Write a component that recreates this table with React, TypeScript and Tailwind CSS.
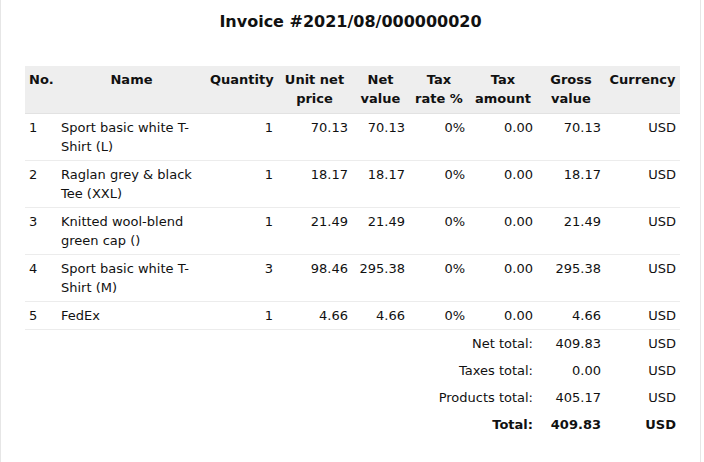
type Line = {
  no: number
  name: string
  qty: number
  unit: string
  net: string
  rate: string
  tax: string
  gross: string
  currency: string
}

const lines: Line[] = [
  { no: 1, name: "Sport basic white T-Shirt (L)", qty: 1, unit: "70.13", net: "70.13", rate: "0%", tax: "0.00", gross: "70.13", currency: "USD" },
  { no: 2, name: "Raglan grey & black Tee (XXL)", qty: 1, unit: "18.17", net: "18.17", rate: "0%", tax: "0.00", gross: "18.17", currency: "USD" },
  { no: 3, name: "Knitted wool-blend green cap ()", qty: 1, unit: "21.49", net: "21.49", rate: "0%", tax: "0.00", gross: "21.49", currency: "USD" },
  { no: 4, name: "Sport basic white T-Shirt (M)", qty: 3, unit: "98.46", net: "295.38", rate: "0%", tax: "0.00", gross: "295.38", currency: "USD" },
  { no: 5, name: "FedEx", qty: 1, unit: "4.66", net: "4.66", rate: "0%", tax: "0.00", gross: "4.66", currency: "USD" },
]

const totals = [
  { label: "Net total:", value: "409.83" },
  { label: "Taxes total:", value: "0.00" },
  { label: "Products total:", value: "405.17" },
  { label: "Total:", value: "409.83", bold: true },
]

const th = "px-1 pt-1 pb-[5px] align-top font-bold text-center"
const td = "px-1 py-1 align-top text-right"

export default function App() {
  return (
    <div className="min-h-[462px] w-[701px] border-x border-[#e6e6e6] bg-white text-[#111] font-['DejaVu_Sans',sans-serif] text-[13px] leading-[19px]">
      <h1 className="pt-[13px] pb-[35px] text-center text-[16px] leading-[18px] font-bold">
        Invoice #2021/08/000000020
      </h1>

      <table className="ml-6 w-[655px] table-fixed border-collapse">
        <colgroup>
          <col className="w-[32px]" />
          <col className="w-[149px]" />
          <col className="w-[71px]" />
          <col className="w-[75px]" />
          <col className="w-[57px]" />
          <col className="w-[60px]" />
          <col className="w-[68px]" />
          <col className="w-[68px]" />
          <col className="w-[75px]" />
        </colgroup>
        <thead>
          <tr className="bg-[#eeeeee] border-b border-[#e2e2e2]">
            <th className="px-1 pt-1 pb-[5px] align-top font-bold text-left">No.</th>
            <th className={th}>Name</th>
            <th className={th}>Quantity</th>
            <th className={th}>Unit net price</th>
            <th className={th}>Net value</th>
            <th className={th}>Tax rate %</th>
            <th className={th}>Tax amount</th>
            <th className={th}>Gross value</th>
            <th className={th}>Currency</th>
          </tr>
        </thead>
        <tbody>
          {lines.map((l) => (
            <tr key={l.no} className="border-b border-[#ececec]">
              <td className="px-1 py-1 align-top text-left">{l.no}</td>
              <td className="px-1 py-1 align-top text-left">{l.name}</td>
              <td className={td}>{l.qty}</td>
              <td className={td}>{l.unit}</td>
              <td className={td}>{l.net}</td>
              <td className={td}>{l.rate}</td>
              <td className={td}>{l.tax}</td>
              <td className={td}>{l.gross}</td>
              <td className={td}>{l.currency}</td>
            </tr>
          ))}
        </tbody>
        <tfoot>
          {totals.map((t) => (
            <tr key={t.label} className={t.bold ? "font-bold" : ""}>
              <td colSpan={7} className="px-1 py-1 text-right">{t.label}</td>
              <td className="px-1 py-1 text-right">{t.value}</td>
              <td className="px-1 py-1 text-right">USD</td>
            </tr>
          ))}
        </tfoot>
      </table>
    </div>
  )
}
